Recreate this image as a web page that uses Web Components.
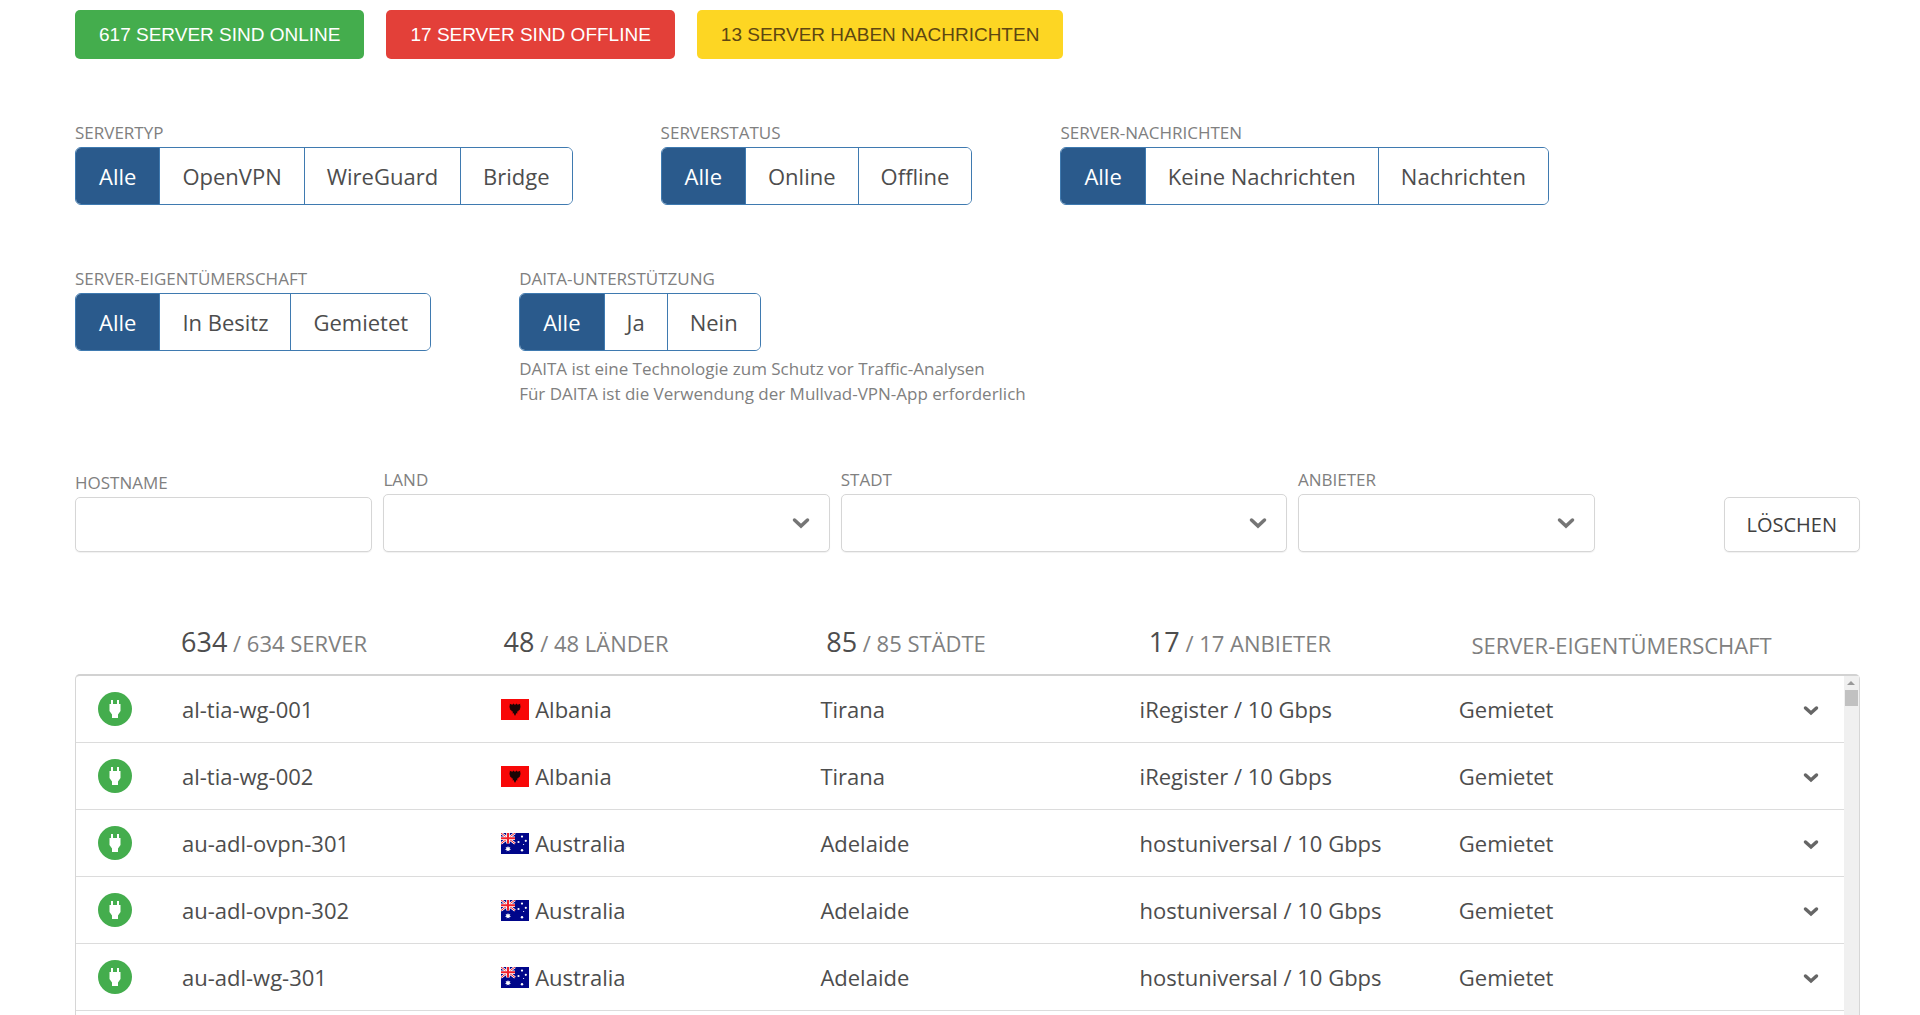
<!DOCTYPE html>
<html lang="de">
<head>
<meta charset="utf-8">
<meta name="viewport" content="width=device-width, initial-scale=1">
<title>Server</title>
<style>
  body {
    margin: 0;
    background: #fff;
    color: #4d4d4d;
    font-family: "Open Sans", "Noto Sans", sans-serif;
  }
</style>
</head>
<body>
<server-page></server-page>

<script>
class StatusBadge extends HTMLElement {
  constructor() {
    super();
    this.attachShadow({ mode: "open" }).innerHTML = `
      <style>
        :host {
          display: block;
          padding: 0 24px;
          border-radius: 5px;
          background: #44ad4d;
          color: #fff;
          font: 19px/49px "Liberation Sans", Arial, sans-serif;
          text-transform: uppercase;
          white-space: nowrap;
        }
        :host([kind="offline"]) {
          background: #e34039;
        }
        :host([kind="message"]) {
          background: #fdd623;
          color: #5e4712;
        }
      </style>
      <slot></slot>
    `;
  }
}
customElements.define("status-badge", StatusBadge);

class ButtonGroup extends HTMLElement {
  connectedCallback() {
    const options = this.getAttribute("options").split(",");
    const hasHint = this.textContent.trim() !== "";
    const root = this.attachShadow({ mode: "open" });
    root.innerHTML = `
      <style>
        :host {
          display: block;
        }
        .label {
          color: #808080;
          font-size: 17px;
          line-height: 28px;
          text-transform: uppercase;
        }
        .group {
          display: flex;
          width: max-content;
          border: 1px solid #3f7ab0;
          border-radius: 6px;
          overflow: hidden;
        }
        button {
          margin: 0;
          padding: 0 22px;
          border: 0;
          background: #fff;
          color: inherit;
          font: inherit;
          font-size: 22px;
          line-height: 56px;
          cursor: pointer;
        }
        button:first-child {
          padding: 0 23px;
        }
        button + button {
          border-left: 1px solid #3f7ab0;
        }
        button[aria-pressed="true"] {
          background: #2a5a8c;
          color: #fff;
        }
        .hint {
          margin-top: 5px;
          color: #808080;
          font-size: 17px;
          line-height: 25px;
        }
      </style>
      <div class="label" id="label">${this.getAttribute("label")}</div>
      <div class="group" role="group" aria-labelledby="label">
        ${options
          .map((o, i) => `<button type="button" aria-pressed="${i === 0}">${o}</button>`)
          .join("")}
      </div>
      ${hasHint ? `<div class="hint"><slot></slot></div>` : ""}
    `;
    const buttons = root.querySelectorAll("button");
    buttons.forEach((button) => {
      button.addEventListener("click", () => {
        buttons.forEach((b) => b.setAttribute("aria-pressed", b === button));
      });
    });
  }
}
customElements.define("button-group", ButtonGroup);

class FilterField extends HTMLElement {
  connectedCallback() {
    const isSelect = this.hasAttribute("select");
    this.attachShadow({ mode: "open" }).innerHTML = `
      <style>
        :host {
          display: block;
          min-width: 0;
        }
        label {
          display: block;
          color: #808080;
          font-size: 17px;
          line-height: 28px;
          text-transform: uppercase;
        }
        .box {
          position: relative;
        }
        input,
        select {
          display: block;
          box-sizing: border-box;
          width: 100%;
          height: 55px;
          margin: 0;
          padding: 0 16px;
          border: 1px solid #d6d6d6;
          border-radius: 5px;
          background: #fff;
          color: inherit;
          font: inherit;
          font-size: 20px;
          appearance: none;
          box-shadow: 0 1px 1px rgba(0, 0, 0, 0.06);
        }
        select {
          height: 58px;
        }
        svg {
          position: absolute;
          top: 22px;
          right: 20px;
          pointer-events: none;
        }
      </style>
      <label for="field">${this.getAttribute("label")}</label>
      <div class="box">
        ${
          isSelect
            ? `<select id="field"><option value=""></option></select>
               <svg width="18" height="14" viewBox="0 0 18 14" fill="none" stroke="#757575"
                 stroke-width="3.500" stroke-linecap="round"><path d="M2.500 4 9 10l6.500-6"/></svg>`
            : `<input id="field" type="text">`
        }
      </div>
    `;
  }
}
customElements.define("filter-field", FilterField);

class CountryFlag extends HTMLElement {
  connectedCallback() {
    const flags = {
      al: `
        <rect width="28" height="21" fill="#f80808"/>
        <path d="M14 6 12.500 4.500l-1.200 1.300-2.600-1.100.4 2-1-.2.9 1.900-.8.200 1.300 1.600-.7.300 1.900 1.200.1.700 1.200.1-.5 1.900 1-.3L14 17l1.500-2.900 1 .3-.5-1.900 1.200-.1.100-.7 1.900-1.200-.7-.3 1.300-1.600-.8-.2.900-1.900-1 .2.400-2-2.600 1.100-1.200-1.300z" fill="#1c0505"/>`,
      au: `
        <rect width="28" height="21" fill="#00068a"/>
        <path d="M0 0 14 10.500M14 0 0 10.500" stroke="#fff" stroke-width="2.400"/>
        <path d="M0 0 14 10.500M14 0 0 10.500" stroke="#f0202c" stroke-width="1"/>
        <path d="M7 0v10.500M0 5.250h14" stroke="#fff" stroke-width="3.600"/>
        <path d="M7 0v10.500M0 5.250h14" stroke="#f0202c" stroke-width="2"/>
        <path d="m7 12.900.7 1.600 1.700-.4-.8 1.500 1.400 1-1.700.3.100 1.700-1.400-1.200-1.400 1.200.1-1.700-1.700-.3 1.400-1-.8-1.500 1.700.4z" fill="#fff"/>
        <g fill="#fff">
          <circle cx="21" cy="3.600" r="1.100"/>
          <circle cx="17.500" cy="9" r="1.100"/>
          <circle cx="24.800" cy="7.800" r="1.100"/>
          <circle cx="22.600" cy="11.500" r=".6"/>
          <circle cx="21" cy="17.200" r="1.200"/>
        </g>`,
    };
    this.attachShadow({ mode: "open" }).innerHTML = `
      <style>
        :host {
          display: inline-block;
          width: 28px;
          height: 21px;
        }
        svg {
          display: block;
        }
      </style>
      <svg width="28" height="21" viewBox="0 0 28 21" aria-hidden="true">${flags[this.getAttribute("code")]}</svg>
    `;
  }
}
customElements.define("country-flag", CountryFlag);

class ServerTable extends HTMLElement {
  constructor() {
    super();
    this.shadowDOM = this.attachShadow({ mode: "open" });
  }

  set servers(servers) {
    this._servers = servers;
    this.render();
  }

  renderRow(server) {
    return `
      <tr>
        <td class="status">
          <svg width="34" height="34" viewBox="0 0 34 34" role="img" aria-label="Online">
            <circle cx="17" cy="17" r="17" fill="#44ad4d"/>
            <path d="M13 8h2v4h4V8h2v4h1.500v7l-2.500 3.500V26h-6v-3.500L11.500 19v-7H13z" fill="#fff"/>
          </svg>
        </td>
        <td>${server.host}</td>
        <td class="country"><country-flag code="${server.code}"></country-flag>${server.country}</td>
        <td>${server.city}</td>
        <td>${server.provider}</td>
        <td>Gemietet</td>
        <td class="toggle">
          <button type="button" aria-label="Details">
            <svg width="16" height="12" viewBox="0 0 16 12" fill="none" stroke="#666"
              stroke-width="3.500" stroke-linecap="round"><path d="M2.500 3 8 8l5.500-5"/></svg>
          </button>
        </td>
      </tr>
    `;
  }

  render() {
    this.shadowDOM.innerHTML = `
      <style>
        :host {
          display: block;
          font-size: 22px;
        }
        table,
        thead,
        tbody {
          display: block;
        }
        tr {
          display: grid;
          grid-template-columns: 106px repeat(5, minmax(0, 1fr)) 66px;
          align-items: center;
        }
        th,
        td {
          padding: 0;
          text-align: left;
          white-space: nowrap;
        }
        thead tr {
          align-items: end;
          height: 40px;
          padding-bottom: 14px;
        }
        th {
          color: #808080;
          font-weight: normal;
          text-transform: uppercase;
        }
        th b {
          color: #4d4d4d;
          font-size: 27px;
          font-weight: normal;
        }
        tbody {
          position: relative;
          padding: 0 15px 4px 0;
          border: 1px solid #d6d6d6;
          border-top: 2px solid #d2d2d2;
          border-bottom: 0;
          border-radius: 5px 5px 0 0;
        }
        tbody tr {
          height: 66px;
          border-bottom: 1px solid #dcdcdc;
        }
        /* scroll track with its thumb */
        tbody::after {
          content: "";
          position: absolute;
          inset: 0 0 0 auto;
          width: 15px;
          background: linear-gradient(#c1c1c1, #c1c1c1) 1px 14px / 13px 16px no-repeat #f0f0f0;
        }
        tbody::before {
          content: "";
          position: absolute;
          z-index: 1;
          top: 5px;
          right: 4px;
          border: solid transparent;
          border-width: 0 4px 4px;
          border-bottom-color: #999;
        }
        .status svg {
          display: block;
          margin-left: 22px;
        }
        .country {
          display: flex;
          align-items: center;
          gap: 6px;
        }
        .toggle {
          text-align: center;
        }
        button {
          padding: 8px;
          border: 0;
          background: none;
          cursor: pointer;
        }
        button svg {
          display: block;
        }
      </style>
      <table>
        <thead>
          <tr>
            <td></td>
            <th><b>634</b> / 634 Server</th>
            <th><b>48</b> / 48 Länder</th>
            <th><b>85</b> / 85 Städte</th>
            <th><b>17</b> / 17 Anbieter</th>
            <th>Server-Eigentümerschaft</th>
          </tr>
        </thead>
        <tbody>${this._servers.map((s) => this.renderRow(s)).join("")}</tbody>
      </table>
    `;
  }
}
customElements.define("server-table", ServerTable);

class ServerPage extends HTMLElement {
  constructor() {
    super();
    this.attachShadow({ mode: "open" }).innerHTML = `
      <style>
        :host {
          display: block;
          padding: 10px 60px 0 75px;
        }
        .badges {
          display: flex;
          flex-wrap: wrap;
          gap: 22px;
          margin-bottom: 60px;
        }
        .filters {
          display: flex;
          flex-wrap: wrap;
          column-gap: 88px;
          margin-bottom: 60px;
        }
        .search {
          display: flex;
          align-items: flex-end;
          gap: 11px;
          margin-bottom: 68px;
        }
        .narrow {
          flex: 0 0 16.666%;
        }
        .wide {
          flex: 0 0 25%;
        }
        .clear {
          height: 55px;
          margin: 0 0 0 auto;
          padding: 0 22px;
          border: 1px solid #d6d6d6;
          border-radius: 5px;
          background: #fff;
          color: #404040;
          font: inherit;
          font-size: 20px;
          text-transform: uppercase;
          box-shadow: 0 1px 1px rgba(0, 0, 0, 0.06);
          cursor: pointer;
        }
      </style>
      <div class="badges">
        <status-badge>617 Server sind online</status-badge>
        <status-badge kind="offline">17 Server sind offline</status-badge>
        <status-badge kind="message">13 Server haben Nachrichten</status-badge>
      </div>
      <div class="filters">
        <button-group label="Servertyp" options="Alle,OpenVPN,WireGuard,Bridge"></button-group>
        <button-group label="Serverstatus" options="Alle,Online,Offline"></button-group>
        <button-group label="Server-Nachrichten" options="Alle,Keine Nachrichten,Nachrichten"></button-group>
      </div>
      <div class="filters">
        <button-group label="Server-Eigentümerschaft" options="Alle,In Besitz,Gemietet"></button-group>
        <button-group label="DAITA-Unterstützung" options="Alle,Ja,Nein">
          DAITA ist eine Technologie zum Schutz vor Traffic-Analysen<br>
          Für DAITA ist die Verwendung der Mullvad-VPN-App erforderlich
        </button-group>
      </div>
      <form class="search">
        <filter-field class="narrow" label="Hostname"></filter-field>
        <filter-field class="wide" select label="Land"></filter-field>
        <filter-field class="wide" select label="Stadt"></filter-field>
        <filter-field class="narrow" select label="Anbieter"></filter-field>
        <button class="clear" type="reset">Löschen</button>
      </form>
      <server-table></server-table>
    `;
    this.shadowRoot.querySelector("server-table").servers = [
      { host: "al-tia-wg-001", code: "al", country: "Albania", city: "Tirana", provider: "iRegister / 10 Gbps" },
      { host: "al-tia-wg-002", code: "al", country: "Albania", city: "Tirana", provider: "iRegister / 10 Gbps" },
      { host: "au-adl-ovpn-301", code: "au", country: "Australia", city: "Adelaide", provider: "hostuniversal / 10 Gbps" },
      { host: "au-adl-ovpn-302", code: "au", country: "Australia", city: "Adelaide", provider: "hostuniversal / 10 Gbps" },
      { host: "au-adl-wg-301", code: "au", country: "Australia", city: "Adelaide", provider: "hostuniversal / 10 Gbps" },
    ];
  }
}
customElements.define("server-page", ServerPage);
</script>
</body>
</html>
